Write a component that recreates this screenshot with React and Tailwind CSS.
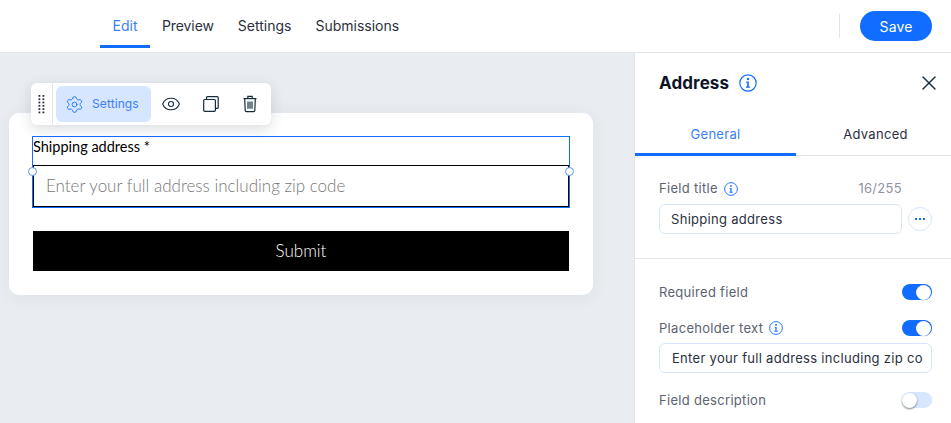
import { X, Eye, Settings } from 'lucide-react'

const Toggle = ({ on }) => (
  <div className={`w-[30px] h-4 rounded-full flex items-center ${on ? 'bg-[#116dff] justify-end pr-px' : 'bg-[#d6e6fe] justify-start'}`}>
    <div className={`w-[15px] h-[15px] rounded-full bg-white ${on ? 'shadow-[0_0_1px_rgba(0,32,90,0.5)]' : 'shadow-[0_1px_2px_rgba(22,45,61,0.6)]'}`} />
  </div>
)

const Handle = ({ side }) => (
  <div className={`absolute top-[31px] w-[9px] h-[9px] rounded-full bg-white border-[1.5px] border-[#5a94f5] ${side}`} />
)

const InfoIcon = ({ size = 14, className = '' }) => (
  <svg width={size} height={size} viewBox="0 0 18 18" fill="none" className={className}>
    <circle cx="9" cy="9" r="8.2" stroke="#116dff" strokeWidth="1.2" />
    <circle cx="9" cy="5" r="1.2" fill="#116dff" />
    <path d="M7.2 7.6H9.8V12.6H11V13.7H7V12.6H8.2V8.7H7.2Z" fill="#116dff" />
  </svg>
)

const CopyIcon = () => (
  <svg width="18" height="18" viewBox="0 0 18 18" fill="none" stroke="#162d3d" strokeWidth="1.2">
    <path d="M4.5 4.5V2.5C4.5 2 4.8 1.6 5.4 1.6H15.2C15.8 1.6 16.2 2 16.2 2.5V12.4C16.2 13 15.8 13.4 15.2 13.4H13.4" />
    <rect x="1.7" y="4.5" width="11.7" height="11.8" rx="1" />
  </svg>
)

const TrashIcon = () => (
  <svg width="18" height="18" viewBox="0 0 18 18" fill="none" stroke="#162d3d" strokeWidth="1.2">
    <path d="M2.5 3.6H15.5" />
    <path d="M6.8 3.4V1.4H11.2V3.4" />
    <path d="M3.7 3.6L4.2 15.4C4.2 16 4.7 16.6 5.4 16.6H12.6C13.3 16.6 13.8 16 13.8 15.4L14.3 3.6" />
    <path d="M7 6.4V13.8M9 6.4V13.8M11 6.4V13.8" />
  </svg>
)

const GripIcon = () => (
  <svg width="7" height="20" viewBox="0 0 7 20" fill="#2b3040">
    {[0, 1, 2, 3, 4, 5].map((i) => (
      <g key={i}>
        <rect x="0.5" y={1 + i * 3.3} width="1.8" height="1.8" />
        <rect x="4.5" y={1 + i * 3.3} width="1.8" height="1.8" />
      </g>
    ))}
  </svg>
)

export default function App() {
  return (
    <div className="w-[951px] h-[423px] overflow-hidden flex flex-col bg-white font-['Inter',sans-serif] text-[#162d3d]">
      {/* Top bar */}
      <header className="h-[53px] shrink-0 border-b border-[#dfe5eb] flex items-start pl-[100px] pr-[19px]">
        <nav className="flex h-[48px] text-[14px] text-[#2b3040]">
          <div className="w-[50px] flex items-center justify-center text-[#3b7ff5] border-b-[3px] border-[#116dff] pt-[5px]">Edit</div>
          <div className="ml-[12px] flex items-center pt-[2px] tracking-[-0.1px]">Preview</div>
          <div className="ml-[24px] flex items-center pt-[2px]">Settings</div>
          <div className="ml-[24px] flex items-center pt-[2px]">Submissions</div>
        </nav>
        <div className="ml-auto flex items-center h-[52px]">
          <div className="w-px h-6 bg-[#dfe5eb] mr-[20px]" />
          <button className="w-[72px] h-[30px] rounded-full bg-[#116dff] text-white text-[14px] tracking-[0.1px]">Save</button>
        </div>
      </header>

      <div className="flex flex-1 min-h-0">
        {/* Canvas */}
        <main className="relative w-[634px] shrink-0 bg-[#e9edf2] pl-[9px] pt-[60px]">
          <div className="w-[584px] h-[182px] bg-white rounded-[10px] shadow-[0_2px_18px_rgba(22,45,61,0.06)] pl-[23px] pt-[23px] font-['Lato',sans-serif] text-black">
            <div className="relative w-[538px]">
              <div className="h-[72px] border border-[#116dff]">
                <div className="h-[28px] pt-px text-[14.5px] leading-[18px]">Shipping address *</div>
                <div className="h-[42px] border border-black flex items-center pl-[12px] text-[17px] font-light text-[#777777]">
                  Enter your full address including zip code
                </div>
              </div>
              <Handle side="left-[-4px]" />
              <Handle side="right-[-4px]" />
            </div>
            <button className="mt-[23px] ml-px w-[536px] h-[40px] bg-black text-white text-[17px] font-light">Submit</button>
          </div>

          {/* Floating toolbar */}
          <div className="absolute left-[31px] top-[30px] w-[240px] h-[42px] bg-white rounded-[6px] shadow-[0_4px_14px_rgba(22,45,61,0.16)] flex items-center">
            <div className="w-[22px] h-full border-r border-[#dfe5eb] flex items-center justify-center">
              <GripIcon />
            </div>
            <div className="ml-[3px] w-[95px] h-[36px] rounded-[6px] bg-[#d6e6fe] flex items-center pl-[9px] gap-[8px] text-[#3b7ff5] text-[12px] tracking-[0.1px]">
              <Settings size={19} strokeWidth={1.1} color="#116dff" />
              <span>Settings</span>
            </div>
            <Eye size={20} strokeWidth={1.3} className="ml-[10px]" color="#162d3d" />
            <div className="ml-[21px]"><CopyIcon /></div>
            <div className="ml-[21px]"><TrashIcon /></div>
          </div>
        </main>

        {/* Sidebar */}
        <aside className="flex-1 border-l border-[#dfe5eb] flex flex-col text-[13px] tracking-[0.3px]">
          <div className="h-[60px] flex items-center pl-[24px] pr-[10px]">
            <span className="text-[17px] font-bold text-[#0e1527] tracking-[0.1px] pt-[2px]">Address</span>
            <InfoIcon size={18} className="ml-[10px]" />
            <X size={24} strokeWidth={1.4} className="ml-auto" color="#162d3d" />
          </div>
          <div className="h-[43px] flex border-b border-[#dfe5eb]">
            <div className="w-[161px] h-[43px] border-b-[3px] border-[#116dff] text-[#3b7ff5] flex items-center justify-center pt-[3px]">General</div>
            <div className="flex-1 flex items-center justify-center pl-[4px] pt-[1px] text-[#2b3040]">Advanced</div>
          </div>

          <div className="pl-[24px] pr-[19px] pt-[25px] h-[103px] border-b border-[#dfe5eb]">
            <div className="flex items-center h-[16px] text-[#5c6270] w-[243px]">
              <span>Field title</span>
              <InfoIcon className="ml-[6px]" />
              <span className="ml-auto text-[#8f93a3]">16/255</span>
            </div>
            <div className="mt-[7px] flex items-center">
              <div className="w-[243px] h-[30px] rounded-[6px] border border-[#d6e6fe] flex items-center pl-[11px] pt-[1px] text-[#2b3040]">Shipping address</div>
              <div className="ml-[6px] w-[24px] h-[24px] rounded-full border border-[#d6e6fe] flex items-center justify-center gap-[2px]">
                <i className="w-[2px] h-[2px] bg-[#116dff]" />
                <i className="w-[2px] h-[2px] bg-[#116dff]" />
                <i className="w-[2px] h-[2px] bg-[#116dff]" />
              </div>
            </div>
          </div>

          <div className="pl-[24px] pr-[19px] pt-[25px] text-[#5c6270]">
            <div className="flex items-center justify-between h-4">
              <span className="pt-[2px]">Required field</span>
              <Toggle on />
            </div>
            <div className="flex items-center h-4 mt-[20px]">
              <span className="pt-[2px]">Placeholder text</span>
              <InfoIcon className="ml-[6px]" />
              <div className="ml-auto"><Toggle on /></div>
            </div>
            <div className="mt-[7px] h-[30px] rounded-[6px] border border-[#d6e6fe] flex items-center pl-[12px] pt-[1px] text-[#2b3040] overflow-hidden whitespace-nowrap">
              Enter your full address including zip co
            </div>
            <div className="flex items-center justify-between h-4 mt-[19px]">
              <span className="pt-[2px]">Field description</span>
              <Toggle />
            </div>
          </div>
        </aside>
      </div>
    </div>
  )
}
